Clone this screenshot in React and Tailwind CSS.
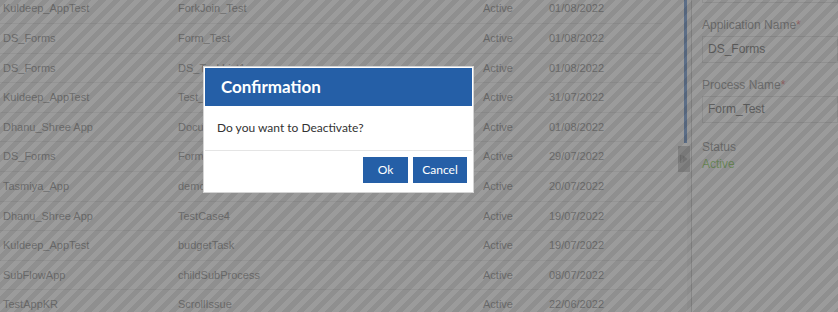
import React from 'react';

const rows = [
  ['Kuldeep_AppTest', 'ForkJoin_Test', 'Active', '01/08/2022'],
  ['DS_Forms', 'Form_Test', 'Active', '01/08/2022'],
  ['DS_Forms', 'DS_TaskList1', 'Active', '01/08/2022'],
  ['Kuldeep_AppTest', 'Test_Process', 'Active', '31/07/2022'],
  ['Dhanu_Shree App', 'DocumentFlow', 'Active', '01/08/2022'],
  ['DS_Forms', 'Form_Test2', 'Active', '29/07/2022'],
  ['Tasmiya_App', 'demoProcess', 'Active', '20/07/2022'],
  ['Dhanu_Shree App', 'TestCase4', 'Active', '19/07/2022'],
  ['Kuldeep_AppTest', 'budgetTask', 'Active', '19/07/2022'],
  ['SubFlowApp', 'childSubProcess', 'Active', '08/07/2022'],
  ['TestAppKR', 'ScrollIssue', 'Active', '22/06/2022'],
];

const Field = ({ label, value }) => (
  <div className="flex flex-col">
    <div className="h-[21px] text-[12px] leading-[21px] text-[#7b7b7b]">
      {label}
      <span className="text-[#f06a6a]">*</span>
    </div>
    <div className="h-[27px] border border-[#dcdcdc] pl-[5px] text-[12px] leading-[25px] text-[#555]">
      {value}
    </div>
  </div>
);

export default function App() {
  return (
    <div className="relative h-[312px] w-[838px] overflow-hidden bg-white font-['Liberation_Sans',Arial,sans-serif]">
      <div className="flex h-full">
        {/* grid */}
        <div className="w-[668px] shrink-0 -mt-[5.6px]">
          {rows.map((r, i) => (
            <div
              key={i}
              className="grid h-[29.6px] w-[662px] grid-cols-[175px_305px_69px_1fr] items-center border-b border-[#e8e8e8] text-[11px] text-[#7d7d7d]"
            >
              <div className="pl-[3px]">{r[0]}</div>
              <div className="pl-[3px]">{r[1]}</div>
              <div className="pl-[3px]">{r[2]}</div>
              <div>{r[3]}</div>
            </div>
          ))}
        </div>

        {/* splitter */}
        <div className="relative flex w-[24px] shrink-0">
          <div className="ml-[16px] h-[143px] w-[3px] bg-[#4c7fc6]" />
          <div className="w-[4px] bg-[#f4f4f4]" />
          <div className="w-[1px] bg-[#c4c4c4]" />
          <div className="absolute left-[10px] top-[146px] flex h-[26px] w-[12px] items-center justify-center bg-[#b8b8b8]">
            <svg width="8" height="10" viewBox="0 0 8 10">
              <rect x="0" y="1" width="1.5" height="8" fill="#8a8a8a" />
              <path d="M2.5 1 L7.5 5 L2.5 9 Z" fill="#8a8a8a" />
            </svg>
          </div>
        </div>

        {/* right form */}
        <div className="flex grow flex-col pl-[10px]">
          <div className="-mt-[24px] h-[27px] border border-[#dcdcdc]" />
          <div className="mt-[12px]">
            <Field label="Application Name" value="DS_Forms" />
          </div>
          <div className="mt-[12px]">
            <Field label="Process Name" value="Form_Test" />
          </div>
          <div className="mt-[16px] text-[12px] leading-[17px] text-[#7b7b7b]">Status</div>
          <div className="text-[12px] leading-[17px] text-[#7bcc48]">Active</div>
        </div>
      </div>

      {/* overlay */}
      <div className="absolute inset-0 bg-[#666]/65 bg-[repeating-linear-gradient(135deg,rgba(0,0,0,0.08)_0px,rgba(0,0,0,0.08)_5px,transparent_5px,transparent_10px)]" />

      {/* dialog */}
      <div className="absolute left-[203px] top-[66px] flex h-[127px] w-[271px] flex-col border border-[#d4d4d4] bg-white p-[1px] font-['Lato','Open_Sans',sans-serif]">
        <div className="flex h-[38px] items-center bg-[#255fa7] pl-[16px] text-[17px] font-bold text-white">
          Confirmation
        </div>
        <div className="flex h-[45px] items-center border-b border-[#e5e5e5] pl-[12px] text-[12px] text-[#333]">
          Do you want to Deactivate?
        </div>
        <div className="flex justify-end gap-[5px] pr-[5px] pt-[6px]">
          <button className="h-[26px] w-[45px] bg-[#255fa7] text-[12px] text-white">Ok</button>
          <button className="h-[26px] w-[54px] bg-[#255fa7] text-[12px] text-white">Cancel</button>
        </div>
      </div>
    </div>
  );
}
